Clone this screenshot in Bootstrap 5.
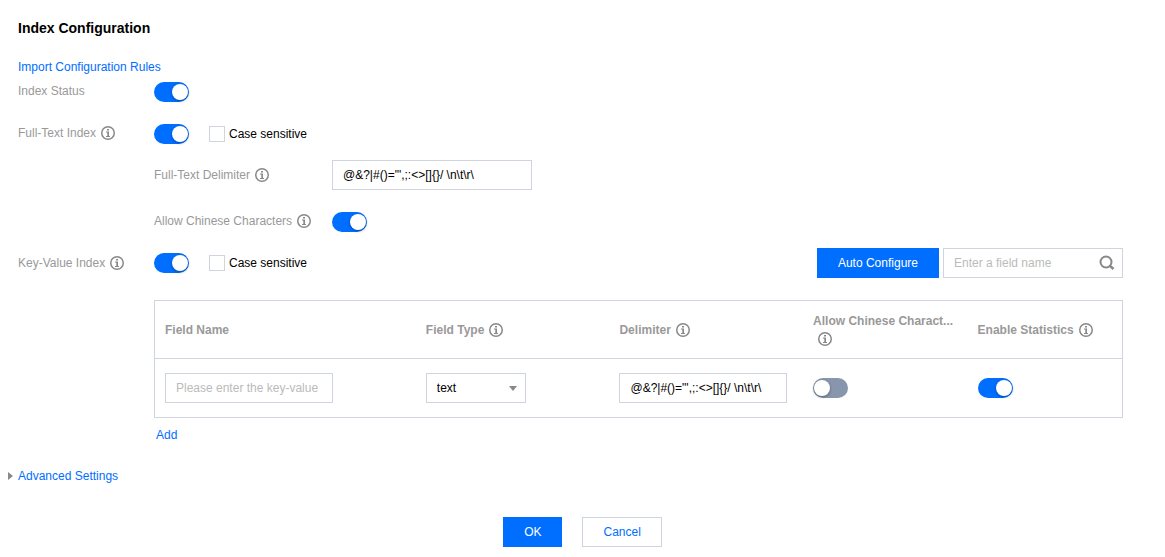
<!DOCTYPE html>
<html lang="en">
<head>
<meta charset="utf-8">
<meta name="viewport" content="width=device-width, initial-scale=1">
<title>Index Configuration</title>
<link href="https://cdn.jsdelivr.net/npm/bootstrap@5.3.0/dist/css/bootstrap.min.css" rel="stylesheet">
<style>
  :root { --blue: #006eff; --line: #cfd5de; --muted: #999; }
  body { font-family: "Liberation Sans", Arial, sans-serif; font-size: 12px; line-height: 18px; color: #000; background: #fff; }
  a { color: var(--blue); text-decoration: none; }
  .page-body { padding: 18px 42px 0 18px; }
  .page-title { font-size: 14px; line-height: 20px; font-weight: 700; margin: 0 0 20px; }
  .import-line { margin-bottom: 6px; }
  .stack-wide { margin-bottom: 22px; }
  .stack-tight { margin-bottom: 16px; }
  .lbl { width: 136px; flex: none; color: var(--muted); }
  .indent { margin-left: 136px; }
  .sub-lbl { width: 178px; flex: none; color: var(--muted); }
  .info { width: 14px; height: 14px; margin-left: 5px; vertical-align: -3px; color: #888; }
  .toggle.form-check-input { display: flex; width: 35px; height: 20px; margin: 0; padding: 2px 1px; border: 0; border-radius: 10px; background: #8796ac; flex: none; }
  .toggle.form-check-input::before { content: ""; width: 16px; height: 16px; border-radius: 50%; background: #fff; box-shadow: 0 1px 3px rgba(0,0,0,.35); }
  .toggle.form-check-input:checked { background: var(--blue); }
  .toggle.form-check-input:checked::before { margin-left: auto; }
  .tick.form-check-input { width: 16px; height: 16px; margin: 0 4px 0 20px; border: 1px solid var(--line); border-radius: 0; }
  .field.form-control, .field.form-select { height: 30px; padding: 0 10px; font-size: 12px; line-height: 18px; color: #000; border: 1px solid var(--line); border-radius: 0; background-color: #fff; }
  .field.form-control::placeholder { color: #bbb; }
  .field.form-select { width: 100px; background-image: url("data:image/svg+xml,%3Csvg xmlns='http://www.w3.org/2000/svg' viewBox='0 0 8 5'%3E%3Cpath fill='%23888' d='M0 0h8L4 5z'/%3E%3C/svg%3E"); background-size: 8px 5px; background-position: right 8px center; }
  .w-delim { width: 200px; }
  .w-cell { width: 168px; }
  .search-box { width: 180px; }
  .search-box .field { padding-right: 32px; }
  .search-btn { position: absolute; right: 8px; top: 7px; width: 16px; height: 16px; padding: 0; border: 0; background: none; color: #888; display: flex; }
  .act.btn { height: 30px; padding: 0 20px; font-size: 12px; line-height: 18px; border-radius: 0; }
  .act-main { background: var(--blue); border-color: var(--blue); color: #fff; }
  .act-plain { background: #fff; border-color: var(--line); color: var(--blue); }
  .fields-table { width: 100%; table-layout: fixed; border: 1px solid var(--line); margin-bottom: 8px; }
  .fields-table th, .fields-table td { padding: 0 10px; vertical-align: middle; }
  .fields-table th { height: 58px; color: var(--muted); border-bottom: 1px solid var(--line); }
  .fields-table td { height: 59px; }
  .add-link { margin: 0 0 23px 138px; }
  .more { margin-left: -10px; margin-bottom: 32px; }
  .caret { width: 5px; height: 8px; margin-right: 5px; }
  .footer-actions { gap: 20px; }
</style>
</head>
<body>
<svg class="d-none" aria-hidden="true">
  <symbol id="i-info" viewBox="0 0 14 14">
    <circle cx="7" cy="7" r="6.250" fill="none" stroke="currentColor" stroke-width="1.500"/>
    <path fill="currentColor" d="M6 3h2v1.500H6zM5 5.500h3V10h1v1H5v-1h1.300V6.500H5z"/>
  </symbol>
</svg>
<main>
  <form class="page-body">
    <h1 class="page-title">Index Configuration</h1>
    <div class="import-line"><a href="#">Import Configuration Rules</a></div>

    <div class="d-flex align-items-start stack-wide">
      <label class="lbl" for="status">Index Status</label>
      <input class="form-check-input toggle" type="checkbox" role="switch" id="status" checked>
    </div>

    <div class="d-flex align-items-start stack-tight">
      <label class="lbl" for="fulltext">Full-Text Index<svg class="info"><use href="#i-info"/></svg></label>
      <div class="d-flex align-items-center">
        <input class="form-check-input toggle" type="checkbox" role="switch" id="fulltext" checked>
        <input class="form-check-input tick" type="checkbox" id="case1">
        <label for="case1">Case sensitive</label>
      </div>
    </div>

    <div class="indent d-flex align-items-center stack-wide">
      <label class="sub-lbl" for="delim">Full-Text Delimiter<svg class="info"><use href="#i-info"/></svg></label>
      <input class="form-control field w-delim" type="text" id="delim" value="@&amp;?|#()=&quot;',;:&lt;&gt;[]{}/ \n\t\r\">
    </div>

    <div class="indent d-flex align-items-start stack-tight">
      <label class="sub-lbl" for="chinese">Allow Chinese Characters<svg class="info"><use href="#i-info"/></svg></label>
      <input class="form-check-input toggle" type="checkbox" role="switch" id="chinese" checked>
    </div>

    <div class="d-flex align-items-center stack-wide">
      <label class="lbl" for="keyvalue">Key-Value Index<svg class="info"><use href="#i-info"/></svg></label>
      <input class="form-check-input toggle" type="checkbox" role="switch" id="keyvalue" checked>
      <input class="form-check-input tick" type="checkbox" id="case2">
      <label for="case2">Case sensitive</label>
      <div class="d-flex gap-1 ms-auto">
        <button type="button" class="btn act act-main">Auto Configure</button>
        <div class="search-box position-relative">
          <input class="form-control field" type="text" placeholder="Enter a field name" aria-label="Field name search">
          <button type="button" class="search-btn" aria-label="Search">
            <svg width="16" height="16" viewBox="0 0 16 16" fill="none" stroke="currentColor" stroke-width="2"><circle cx="7" cy="7" r="5.500"/><path d="M10.500 10.500l4 3.500" stroke-width="2.500"/></svg>
          </button>
        </div>
      </div>
    </div>

    <div class="indent">
      <table class="fields-table">
        <colgroup><col style="width:27%"><col style="width:20%"><col style="width:20%"><col style="width:17%"><col style="width:16%"></colgroup>
        <thead>
          <tr>
            <th scope="col">Field Name</th>
            <th scope="col">Field Type<svg class="info"><use href="#i-info"/></svg></th>
            <th scope="col">Delimiter<svg class="info"><use href="#i-info"/></svg></th>
            <th scope="col" title="Allow Chinese Characters">Allow Chinese Charact... <svg class="info"><use href="#i-info"/></svg></th>
            <th scope="col">Enable Statistics<svg class="info"><use href="#i-info"/></svg></th>
          </tr>
        </thead>
        <tbody>
          <tr>
            <td><input class="form-control field w-cell" type="text" placeholder="Please enter the key-value" aria-label="Field name"></td>
            <td><select class="form-select field" aria-label="Field type"><option>text</option><option>long</option><option>double</option></select></td>
            <td><input class="form-control field w-cell" type="text" aria-label="Delimiter" value="@&amp;?|#()=&quot;',;:&lt;&gt;[]{}/ \n\t\r\"></td>
            <td><input class="form-check-input toggle" type="checkbox" role="switch" aria-label="Allow Chinese characters"></td>
            <td><input class="form-check-input toggle" type="checkbox" role="switch" aria-label="Enable statistics" checked></td>
          </tr>
        </tbody>
      </table>
    </div>

    <div class="add-link"><a href="#">Add</a></div>
    <div class="more d-flex align-items-center">
      <svg class="caret" viewBox="0 0 5 8"><path fill="#888" d="M0 0l5 4-5 4z"/></svg>
      <a href="#">Advanced Settings</a>
    </div>
  </form>
  <div class="d-flex justify-content-center footer-actions">
    <button type="button" class="btn act act-main">OK</button>
    <button type="button" class="btn act act-plain">Cancel</button>
  </div>
</main>
<script src="https://cdn.jsdelivr.net/npm/bootstrap@5.3.0/dist/js/bootstrap.bundle.min.js"></script>
</body>
</html>
